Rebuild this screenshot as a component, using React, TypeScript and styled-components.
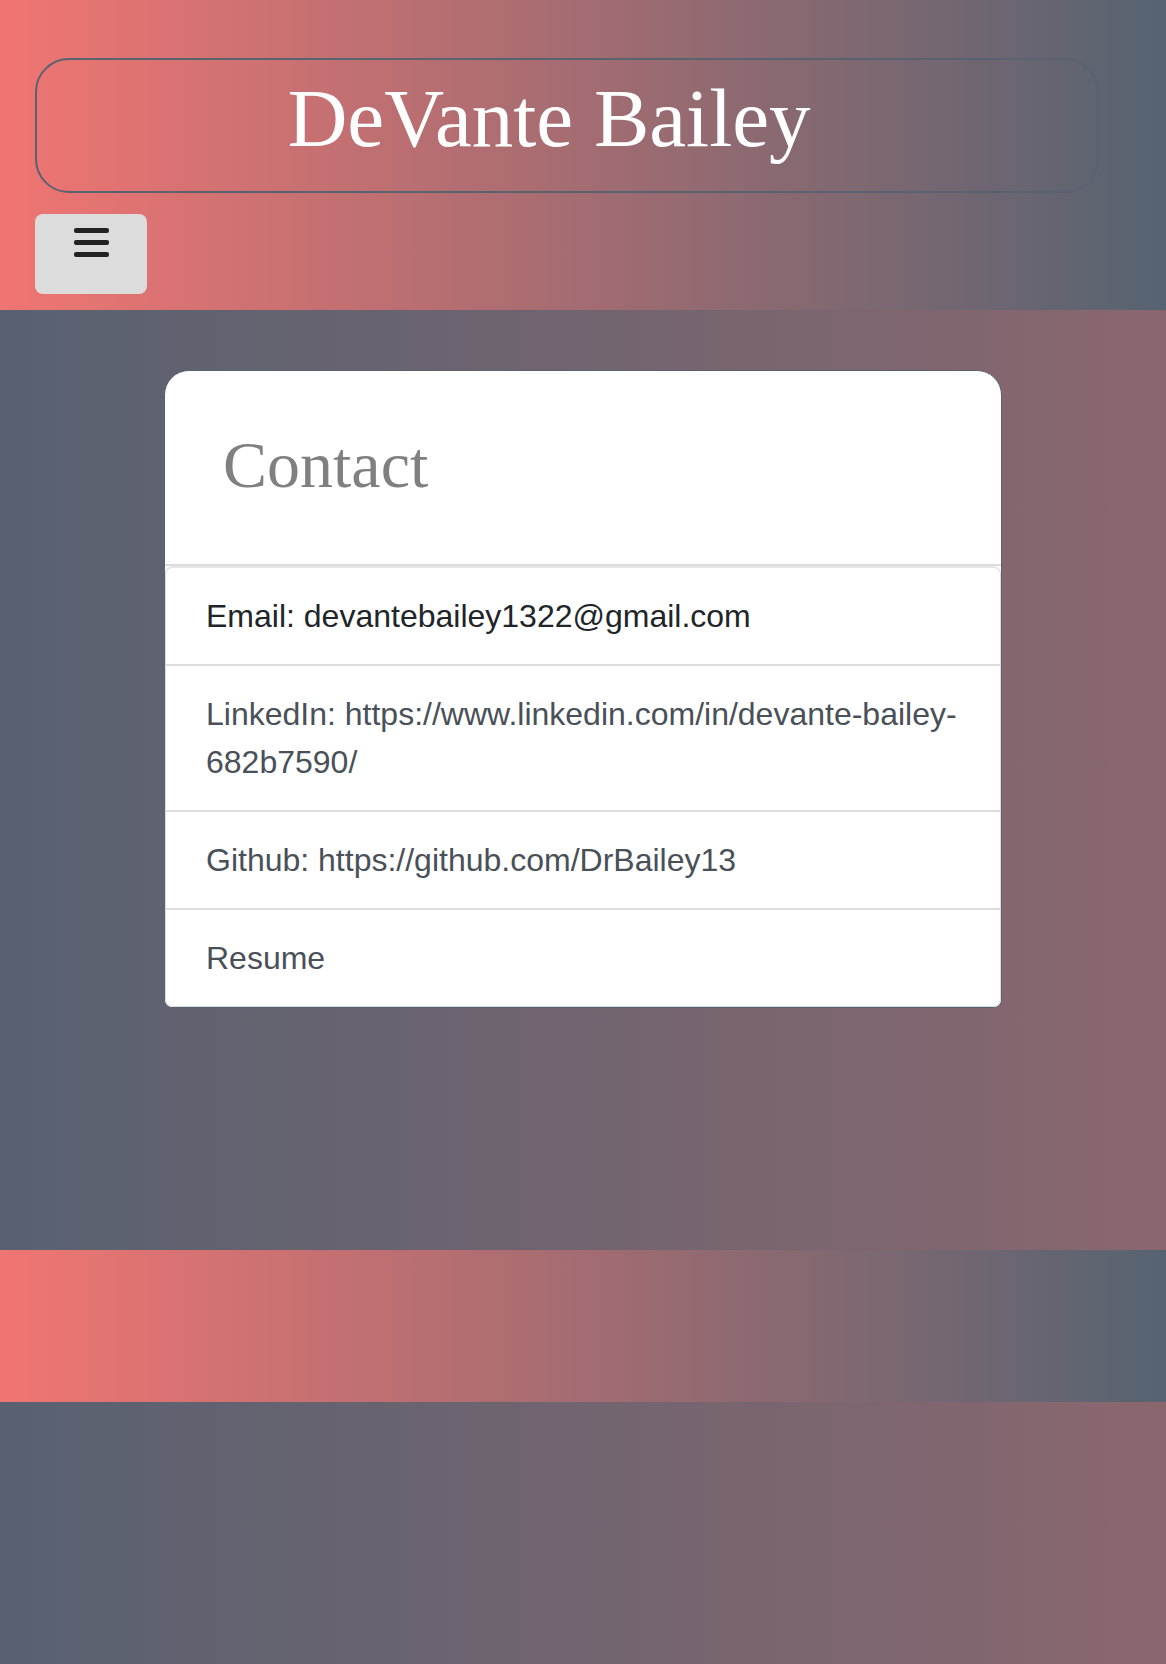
import React from "react";
import styled, { createGlobalStyle } from "styled-components";

const GlobalStyle = createGlobalStyle`
  html, body {
    margin: 0;
    padding: 0;
  }
  body {
    font-family: "Liberation Sans", Arial, sans-serif;
    background: #586170;
  }
  * {
    box-sizing: border-box;
  }
`;

const contactItems = [
  { key: "email", label: "Email: devantebailey1322@gmail.com", plain: true },
  {
    key: "linkedin",
    label: "LinkedIn: https://www.linkedin.com/in/devante-bailey-682b7590/"
  },
  { key: "github", label: "Github: https://github.com/DrBailey13" },
  { key: "resume", label: "Resume" }
];

const App = () => {
  return (
    <>
      <GlobalStyle />
      <Page>
        <Header>
          <TitleBox>
            <Title>DeVante Bailey</Title>
          </TitleBox>
          <MenuButton aria-label="menu">
            <Bar />
            <Bar />
            <Bar />
          </MenuButton>
        </Header>
        <Main>
          <Card>
            <CardHeader>
              <CardTitle>Contact</CardTitle>
            </CardHeader>
            <List>
              {contactItems.map((item) => (
                <Item key={item.key} plain={item.plain}>
                  {item.label}
                </Item>
              ))}
            </List>
          </Card>
        </Main>
        <Footer />
        <Bottom />
      </Page>
    </>
  );
};

const coralToSlate = "linear-gradient(to right, #f07572, #566371)";
const slateToMauve = "linear-gradient(to right, #586170, #8a676f)";

const Page = styled.div`
  width: 100%;
  min-height: 1664px;
  display: flex;
  flex-direction: column;
`;

const Header = styled.header`
  background: ${coralToSlate};
  height: 310px;
  padding: 58px 67px 0 35px;
  display: flex;
  flex-direction: column;
  align-items: flex-start;
`;

const TitleBox = styled.div`
  width: 100%;
  height: 135px;
  border: 2px solid #59626f;
  border-radius: 34px;
  display: flex;
  align-items: center;
  justify-content: center;
  padding-right: 36px;
`;

const Title = styled.h1`
  margin: 0;
  font-family: "Liberation Serif", "Times New Roman", serif;
  font-weight: 400;
  font-size: 83px;
  line-height: 1;
  color: #ffffff;
  padding-bottom: 14px;
`;

const MenuButton = styled.button`
  margin-top: 21px;
  width: 112px;
  height: 80px;
  background: #dcdcdc;
  border: none;
  border-radius: 8px;
  display: flex;
  flex-direction: column;
  align-items: center;
  justify-content: flex-start;
  gap: 7px;
  padding: 14px 0 0;
  cursor: pointer;
`;

const Bar = styled.span`
  display: block;
  width: 35px;
  height: 5px;
  border-radius: 2px;
  background: #222222;
`;

const Main = styled.main`
  background: ${slateToMauve};
  height: 940px;
  padding-top: 60px;
`;

const Card = styled.section`
  width: 838px;
  margin: 0 auto;
  background: #ffffff;
  border: 1px solid #59626f;
  border-radius: 25px 25px 8px 8px;
  overflow: hidden;
`;

const CardHeader = styled.div`
  height: 195px;
  padding: 0 0 6px 58px;
  border-bottom: 2px solid #dddddd;
  display: flex;
  align-items: center;
`;

const CardTitle = styled.h2`
  margin: 0;
  font-family: "Liberation Serif", "Times New Roman", serif;
  font-weight: 400;
  font-size: 66px;
  line-height: 1;
  color: #808080;
`;

const List = styled.ul`
  list-style: none;
  margin: 0;
  padding: 0;
  border: 1px solid #dddddd;
  border-top: 2px solid #e6e6e6;
  border-radius: 8px;
`;

const Item = styled.li<{ plain?: boolean }>`
  padding: 24px 40px;
  font-size: 32px;
  line-height: 48px;
  color: ${(p) => (p.plain ? "#212529" : "#495057")};
  border-top: 2px solid #dddddd;
  &:first-child {
    border-top: none;
  }
`;

const Footer = styled.footer`
  background: ${coralToSlate};
  height: 152px;
`;

const Bottom = styled.div`
  background: ${slateToMauve};
  flex: 1;
`;

export default App;
